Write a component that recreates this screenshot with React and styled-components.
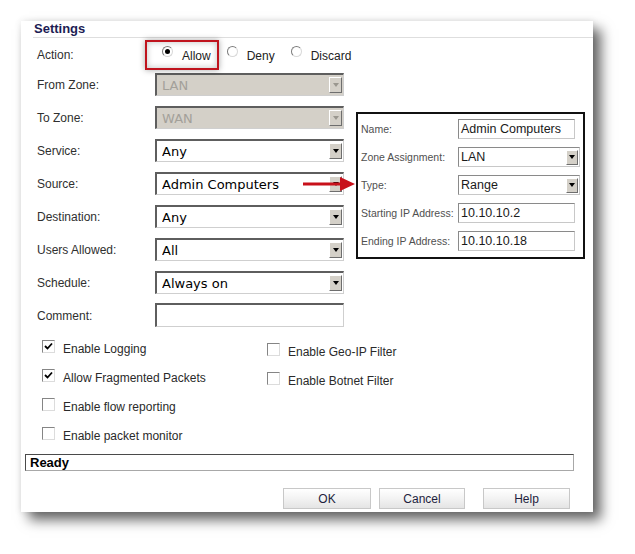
import React from "react";
import styled, { createGlobalStyle } from "styled-components";

const Global = createGlobalStyle`
  html, body { margin: 0; padding: 0; background: #fff; }
  body { font-family: "Liberation Sans", Arial, sans-serif; }
`;

const Page = styled.div`
  width: 635px;
  height: 554px;
  padding: 21px 0 0 21px;
  box-sizing: border-box;
  overflow: hidden;
`;

const Panel = styled.div`
  position: relative;
  width: 572px;
  height: 491px;
  background: #fff;
  box-shadow: 8px 8px 12px rgba(0, 0, 0, 0.6), 0 0 7px rgba(0, 0, 0, 0.1);
  display: flex;
  flex-direction: column;
`;

const Header = styled.div`
  margin-left: 12px;
  padding-left: 1px;
  height: 16px;
  line-height: 16px;
  font-size: 13px;
  font-weight: bold;
  color: #1c1c54;
  border-bottom: 1px solid #dedede;
`;

const Form = styled.div`
  display: grid;
  grid-template-columns: 118px 189px;
  grid-template-rows: 20px;
  grid-auto-rows: 23px;
  row-gap: 10px;
  padding: 5px 0 0 16px;
`;

const Label = styled.div`
  align-self: center;
  font-size: 12px;
  color: #2f2f2f;
  padding-top: ${(p) => (p.$nudge ? p.$nudge : 0)}px;
`;

const RadioGroup = styled.div`
  display: flex;
  align-items: center;
  padding-left: 7px;
`;

const RadioOption = styled.label`
  display: flex;
  align-items: center;
  margin-right: 16px;
  font-size: 12px;
  color: #222;
  padding-top: 5px;
`;

const RadioCircle = styled.span`
  width: 11px;
  height: 11px;
  box-sizing: border-box;
  border-radius: 50%;
  border: 1px solid;
  border-color: #7c7c7c #d8d8d8 #d8d8d8 #7c7c7c;
  background: #fff;
  margin-right: 9px;
  margin-bottom: 8px;
  display: flex;
  align-items: center;
  justify-content: center;
  &::after {
    content: "";
    width: 5px;
    height: 5px;
    border-radius: 50%;
    background: ${(p) => (p.$checked ? "#000" : "transparent")};
  }
`;

const SelectBox = styled.div`
  position: relative;
  box-sizing: border-box;
  height: 23px;
  border-style: solid;
  border-width: 2px 1px 1px 2px;
  border-color: #5e5e5e #cfcfcf #cfcfcf #5e5e5e;
  background: ${(p) => (p.$disabled ? "#d4d0c8" : "#fff")};
  display: flex;
  align-items: center;
  font-family: "DejaVu Sans", sans-serif;
  font-size: 13px;
  color: ${(p) => (p.$disabled ? "#a3a09a" : "#000")};
  padding-left: 5px;
`;

const SelectValue = styled.span`
  flex: 1;
  white-space: nowrap;
  overflow: hidden;
`;

const DropButton = styled.span`
  width: 13px;
  height: 16px;
  margin-right: 1px;
  box-sizing: border-box;
  background: #d4d0c8;
  border-style: solid;
  border-width: 1px;
  border-color: #fff #6e6e6e #6e6e6e #fff;
  display: flex;
  align-items: center;
  justify-content: center;
  &::after {
    content: "";
    border-left: 3.5px solid transparent;
    border-right: 3.5px solid transparent;
    border-top: 4px solid ${(p) => (p.$disabled ? "#9a978f" : "#000")};
  }
`;

const TextBox = styled.div`
  box-sizing: border-box;
  height: 24px;
  border-style: solid;
  border-width: 2px 1px 1px 2px;
  border-color: #5e5e5e #cfcfcf #cfcfcf #5e5e5e;
  background: #fff;
  margin-top: -1px;
`;

const Checks = styled.div`
  display: grid;
  grid-template-columns: 225px 1fr;
  padding-left: 21px;
  margin-top: 7px;
`;

const CheckColumn = styled.div`
  display: flex;
  flex-direction: column;
  padding-top: ${(p) => p.$offset || 0}px;
`;

const CheckItem = styled.div`
  height: 29px;
  display: flex;
  align-items: center;
  font-size: 12px;
  color: #2a2a2a;
`;

const CheckBox = styled.span`
  width: 13px;
  height: 13px;
  box-sizing: border-box;
  border-style: solid;
  border-width: 1px;
  border-color: #858585 #dcdcdc #dcdcdc #858585;
  background: #fff;
  margin-right: 8px;
  margin-bottom: 5px;
  display: flex;
  align-items: center;
  justify-content: center;
`;

const StatusBar = styled.div`
  margin: 4px 19px 0 4px;
  height: 17px;
  box-sizing: border-box;
  border-style: solid;
  border-width: 1px;
  border-color: #4a4a4a #a8a8a8 #a8a8a8 #4a4a4a;
  font-size: 13px;
  font-weight: bold;
  color: #000;
  line-height: 16px;
  padding-left: 4px;
  overflow: hidden;
`;

const ButtonRow = styled.div`
  display: flex;
  justify-content: flex-end;
  margin-top: 17px;
  padding-right: 23px;
`;

const Button = styled.button`
  width: ${(p) => p.$w}px;
  height: 21px;
  margin-left: ${(p) => p.$gap}px;
  box-sizing: border-box;
  border: 1px solid #c8c8c8;
  background: linear-gradient(#ffffff, #f3f3f3 50%, #e4e4e4);
  font-family: "Liberation Sans", Arial, sans-serif;
  font-size: 12px;
  color: #1e1e3e;
  padding: 0;
`;

const Highlight = styled.div`
  position: absolute;
  left: 124px;
  top: 19px;
  width: 74px;
  height: 30px;
  box-sizing: border-box;
  border: 2px solid #c0141e;
  box-shadow: 0 0 6px rgba(0, 0, 0, 0.35), inset 0 0 6px rgba(0, 0, 0, 0.25);
  pointer-events: none;
`;

const Arrow = styled.svg`
  position: absolute;
  left: 282px;
  top: 155px;
`;

const Popup = styled.div`
  position: absolute;
  left: 335px;
  top: 91px;
  width: 229px;
  height: 147px;
  box-sizing: border-box;
  border: 2px solid #111;
  background: #fff;
  display: grid;
  grid-template-columns: 97px 122px;
  grid-auto-rows: 20px;
  row-gap: 8px;
  padding: 5px 0 0 3px;
`;

const PopLabel = styled.div`
  align-self: center;
  font-size: 10.5px;
  color: #505050;
  white-space: nowrap;
`;

const PopInput = styled.div`
  box-sizing: border-box;
  width: ${(p) => (p.$select ? 122 : 117)}px;
  height: 20px;
  border: 1px solid;
  border-color: #8a8a8a #c8c8c8 #c8c8c8 #8a8a8a;
  background: #fff;
  display: flex;
  align-items: center;
  padding-left: 2px;
  font-size: 12.5px;
  color: #1a1a1a;
`;

const PopDrop = styled.span`
  margin-left: auto;
  margin-right: 1px;
  width: 12px;
  height: 15px;
  box-sizing: border-box;
  background: #d4d0c8;
  border: 1px solid;
  border-color: #fff #6e6e6e #6e6e6e #fff;
  display: flex;
  align-items: center;
  justify-content: center;
  &::after {
    content: "";
    border-left: 3px solid transparent;
    border-right: 3px solid transparent;
    border-top: 4px solid #000;
  }
`;

const Check = () => (
  <svg width="9" height="9" viewBox="0 0 9 9">
    <path d="M1 4 L3.5 6.5 L8 1.5" fill="none" stroke="#000" strokeWidth="1.8" />
  </svg>
);

const Select = ({ value, disabled }) => (
  <SelectBox $disabled={disabled}>
    <SelectValue>{value}</SelectValue>
    <DropButton $disabled={disabled} />
  </SelectBox>
);

const rows = [
  ["From Zone:", "LAN", true],
  ["To Zone:", "WAN", true],
  ["Service:", "Any"],
  ["Source:", "Admin Computers"],
  ["Destination:", "Any"],
  ["Users Allowed:", "All"],
  ["Schedule:", "Always on"],
];

const leftChecks = [
  ["Enable Logging", true],
  ["Allow Fragmented Packets", true],
  ["Enable flow reporting", false],
  ["Enable packet monitor", false],
];
const rightChecks = [
  ["Enable Geo-IP Filter", false],
  ["Enable Botnet Filter", false],
];

const popRows = [
  ["Name:", "Admin Computers", false],
  ["Zone Assignment:", "LAN", true],
  ["Type:", "Range", true],
  ["Starting IP Address:", "10.10.10.2", false],
  ["Ending IP Address:", "10.10.10.18", false],
];

export default function App() {
  return (
    <Page>
      <Global />
      <Panel>
        <Header>Settings</Header>
        <Form>
          <Label $nudge={3}>Action:</Label>
          <RadioGroup>
            <RadioOption>
              <RadioCircle $checked />
              Allow
            </RadioOption>
            <RadioOption>
              <RadioCircle />
              Deny
            </RadioOption>
            <RadioOption>
              <RadioCircle />
              Discard
            </RadioOption>
          </RadioGroup>
          {rows.map(([label, value, disabled]) => (
            <React.Fragment key={label}>
              <Label>{label}</Label>
              <Select value={value} disabled={disabled} />
            </React.Fragment>
          ))}
          <Label>Comment:</Label>
          <TextBox />
        </Form>
        <Checks>
          <CheckColumn>
            {leftChecks.map(([t, c]) => (
              <CheckItem key={t}>
                <CheckBox>{c && <Check />}</CheckBox>
                {t}
              </CheckItem>
            ))}
          </CheckColumn>
          <CheckColumn $offset={3}>
            {rightChecks.map(([t, c]) => (
              <CheckItem key={t}>
                <CheckBox>{c && <Check />}</CheckBox>
                {t}
              </CheckItem>
            ))}
          </CheckColumn>
        </Checks>
        <StatusBar>Ready</StatusBar>
        <ButtonRow>
          <Button $w={88} $gap={0}>OK</Button>
          <Button $w={86} $gap={8}>Cancel</Button>
          <Button $w={87} $gap={18}>Help</Button>
        </ButtonRow>

        <Highlight />
        <Arrow width="52" height="16" viewBox="0 0 52 16">
          <rect x="0" y="6.5" width="39" height="3" fill="#c8101a" />
          <polygon points="37,1 52,8 37,15" fill="#c8101a" />
        </Arrow>
        <Popup>
          {popRows.map(([label, value, sel]) => (
            <React.Fragment key={label}>
              <PopLabel>{label}</PopLabel>
              <PopInput $select={sel}>
                {value}
                {sel && <PopDrop />}
              </PopInput>
            </React.Fragment>
          ))}
        </Popup>
      </Panel>
    </Page>
  );
}
